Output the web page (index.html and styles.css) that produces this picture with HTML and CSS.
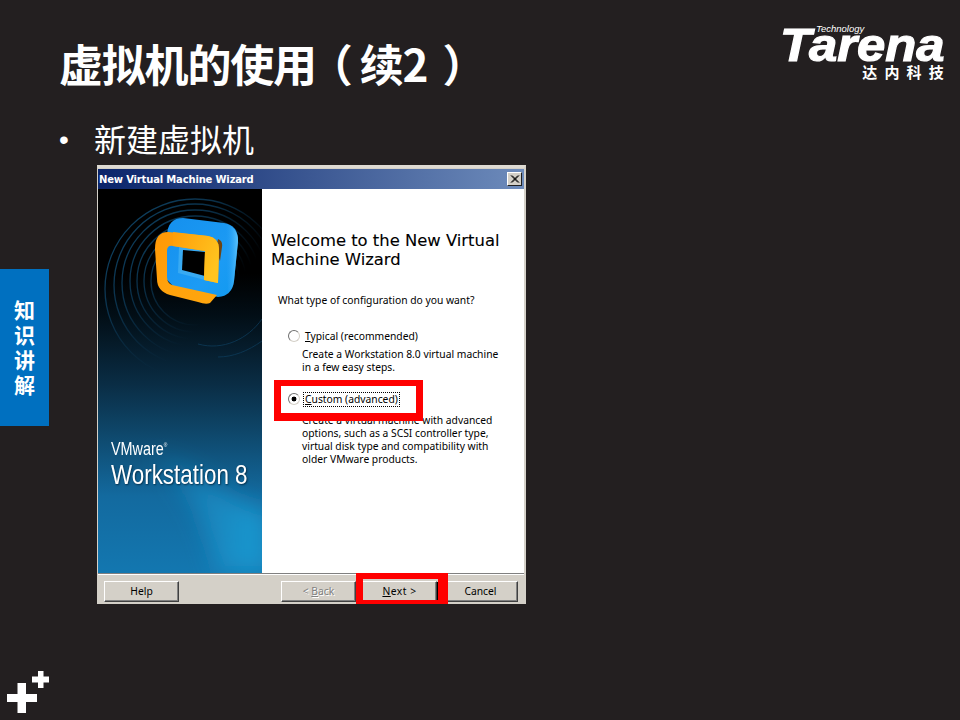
FILE: index.html
```html
<!DOCTYPE html>
<html lang="zh-CN">
<head>
<meta charset="utf-8">
<title>虚拟机的使用（续2）</title>
<link rel="stylesheet" href="styles.css">
</head>
<body>
<main class="slide">
  <header class="head">
    <h1 class="title">虚拟机的使用<span class="punct punct-open">（</span>续2<span class="punct punct-close">）</span></h1>
    <div class="logo">
      <span class="logo-tech">Technology</span>
      <span class="logo-name">Tarena</span>
      <span class="logo-cn">达内科技</span>
    </div>
  </header>
  <div class="bullet"><span class="dot">•</span><span>新建虚拟机</span></div>

  <section class="wizard">
    <div class="titlebar">
      <span>New Virtual Machine Wizard</span>
      <span class="close"><svg width="11" height="10" viewBox="0 0 11 10"><path d="M2 1.5l7 7M3 1.5l7 7M9 1.5l-7 7M10 1.5l-7 7" stroke="#000" stroke-width="1" fill="none"/></svg></span>
    </div>
    <div class="body">
      <aside class="art">
        <svg class="art-bg" width="164" height="384" viewBox="0 0 164 384">
          <defs>
            <linearGradient id="bg" x1="0" y1="0" x2="0" y2="1">
              <stop offset="0" stop-color="#000"/>
              <stop offset=".22" stop-color="#000"/>
              <stop offset=".33" stop-color="#020e16"/>
              <stop offset=".51" stop-color="#0a2d45"/>
              <stop offset=".63" stop-color="#0e4669"/>
              <stop offset=".8" stop-color="#136a9f"/>
              <stop offset="1" stop-color="#1377b0"/>
            </linearGradient>
            <linearGradient id="streak" gradientUnits="userSpaceOnUse" x1="40" y1="0" x2="164" y2="0">
              <stop offset="0" stop-color="#1c9ad2" stop-opacity="0"/>
              <stop offset="1" stop-color="#1c9ad2" stop-opacity=".95"/>
            </linearGradient>
            <linearGradient id="ring" gradientUnits="userSpaceOnUse" x1="0" y1="20" x2="130" y2="130">
              <stop offset="0" stop-color="#10496d"/>
              <stop offset=".5" stop-color="#0a2f48"/>
              <stop offset=".9" stop-color="#0a2f48" stop-opacity="0"/>
            </linearGradient>
            <linearGradient id="blue" x1="0" y1="0" x2="1" y2="1">
              <stop offset="0" stop-color="#1590ee"/>
              <stop offset=".65" stop-color="#1c9bf4"/>
              <stop offset="1" stop-color="#119af0"/>
            </linearGradient>
            <linearGradient id="blueside" x1="0" y1="0" x2="1" y2="0">
              <stop offset="0" stop-color="#1a97f2" stop-opacity="0"/>
              <stop offset="1" stop-color="#5cc4fc"/>
            </linearGradient>
            <linearGradient id="orange" x1="0" y1="0" x2="1" y2="1">
              <stop offset="0" stop-color="#ff9806"/>
              <stop offset=".5" stop-color="#ffa20c"/>
              <stop offset="1" stop-color="#ffa60e"/>
            </linearGradient>
            <linearGradient id="orangetop" gradientUnits="userSpaceOnUse" x1="75" y1="50" x2="121" y2="70">
              <stop offset="0" stop-color="#ff9f0a"/>
              <stop offset="1" stop-color="#ffc41f"/>
            </linearGradient>
            <filter id="soft"><feGaussianBlur stdDeviation="11"/></filter>
          </defs>
          <rect width="164" height="384" fill="url(#bg)"/>
          <path d="M50 262C90 270 120 310 170 322V384H120C110 340 90 300 50 262Z" fill="url(#streak)" filter="url(#soft)"/>
          <g fill="none" stroke="url(#ring)" stroke-width="1.3">
            <circle cx="97" cy="92" r="44"/>
            <circle cx="97" cy="92" r="51"/>
            <circle cx="97" cy="92" r="58"/>
            <circle cx="97" cy="92" r="65"/>
            <circle cx="97" cy="94" r="73"/>
            <circle cx="97" cy="96" r="81"/>
            <circle cx="97" cy="100" r="90"/>
          </g>
          <g fill="none" stroke="#0e3f5f" stroke-width="1" opacity=".7">
            <path d="M100 155C125 162 150 150 164 130"/>
            <path d="M120 168C135 168 150 162 164 152"/>
          </g>
          <path d="M69 46Q70 29 85 29L126 34Q140 36 140 52L136 92Q134 107 120 108L76 98L68 90Z" fill="url(#blue)"/>
          <path d="M127 35Q140 38 140 52L136 92Q135 100 130 104Z" fill="url(#blueside)"/>
          <path d="M81 58L107 62L107 91L80 84Z" fill="#38aaf2"/>
          <path d="M85 61L107 63L107 87L84 81Z" fill="#000"/>
          <path d="M120 50Q125 52 124 58L122 72L118 60Z" fill="#6e4412"/>
          <path d="M57 60Q57 43 70 43L110 47Q121 49 121 60L120 94L106 91L107 62L75 57Q69 56 69 62L69 88Q69 94 74 96L119 106L112 114Q108 116 100 113L72 106Q59 102 59 90Z" fill="url(#orange)"/>
          <path d="M75 43L110 47Q121 49 121 60L120 94L106 91L107 62L75 57Z" fill="url(#orangetop)"/>
        </svg>
        <div class="brand">
          <div class="vm">VMware<sup>®</sup></div>
          <div class="ws">Workstation 8</div>
        </div>
      </aside>
      <div class="content">
        <h2 class="welcome">Welcome to the New Virtual<br>Machine Wizard</h2>
        <p class="question">What type of configuration do you want?</p>
        <div class="option">
          <span class="radio"></span>
          <span class="label"><u>T</u>ypical (recommended)</span>
        </div>
        <p class="desc">Create a Workstation 8.0 virtual machine<br>in a few easy steps.</p>
        <div class="option option-custom">
          <span class="radio checked"></span>
          <span class="label focus"><u>C</u>ustom (advanced)</span>
        </div>
        <p class="desc desc-custom">Create a virtual machine with advanced<br>options, such as a SCSI controller type,<br>virtual disk type and compatibility with<br>older VMware products.</p>
        <div class="mark mark-option"></div>
      </div>
    </div>
    <footer class="buttons">
      <button class="btn">Help</button>
      <span class="spacer"></span>
      <button class="btn disabled">&lt; <u>B</u>ack</button>
      <button class="btn default"><u>N</u>ext &gt;</button>
      <button class="btn">Cancel</button>
      <div class="mark mark-next"></div>
    </footer>
  </section>

  <nav class="tab"><span>知</span><span>识</span><span>讲</span><span>解</span></nav>
  <svg class="plus" width="60" height="60" viewBox="0 0 60 60">
    <path d="M7 34h10.500V23h8.500v11h11v8H26v11h-8.500V42H7z" fill="#fff"/>
    <path d="M32 16.500h6V11h5.500v5.500H49v6h-5.500V28H38v-5.500h-6z" fill="#fff"/>
  </svg>
</main>
</body>
</html>
```

FILE: styles.css
```css
* { box-sizing: border-box; }
html, body { margin: 0; padding: 0; }
body { background: #231f20; }
.slide {
  position: relative;
  width: 960px;
  height: 720px;
  overflow: hidden;
  background: #231f20;
  color: #fff;
  font-family: "Noto Sans CJK SC", "Noto Sans", sans-serif;
}
.head {
  display: flex;
  justify-content: space-between;
  align-items: flex-start;
  height: 110px;
  padding: 25px 16px 0 59px;
}
.title {
  margin: -2px 0 0;
  font-size: 44px;
  font-weight: 700;
  line-height: 80px;
  letter-spacing: -1.2px;
  white-space: nowrap;
}
.punct { display: inline-block; letter-spacing: 0; }
.punct-open { transform: translateX(-7px); }
.punct-close { transform: translateX(15px); }
.logo {
  position: relative;
  width: 164px;
  height: 56px;
  flex: none;
}
.logo-tech {
  position: absolute;
  left: 36px;
  top: -2px;
  font: italic 400 9.5px "Liberation Sans", sans-serif;
}
.logo-name {
  position: absolute;
  left: 0;
  top: -7px;
  font: italic 700 47px/53px "Liberation Sans", sans-serif;
  -webkit-text-stroke: 1.2px #fff;
  transform: scaleX(1.08);
  transform-origin: left;
}
.logo-cn {
  position: absolute;
  right: 0;
  top: 38px;
  font-size: 15px;
  font-weight: 700;
  line-height: 18px;
  letter-spacing: 7.2px;
  margin-right: -7px;
}
.bullet {
  display: flex;
  height: 55px;
  padding-left: 59px;
  font-size: 32px;
  line-height: 56px;
  font-weight: 400;
}
.dot { width: 35px; font-family: "Liberation Sans", sans-serif; font-size: 28px; line-height: 60px; }
.wizard {
  display: flex;
  flex-direction: column;
  width: 429px;
  height: 439px;
  margin-left: 97px;
  background: #d4d0c8;
  border-top: 3px solid #dedad3;
  border-left: 1px solid #d4d0c8;
  border-right: 2px solid #d4d0c8;
  color: #000;
  font-family: "Noto Sans", sans-serif;
}
.titlebar {
  display: flex;
  align-items: center;
  justify-content: space-between;
  height: 20px;
  margin-top: 1px;
  padding: 0 2px 0 1px;
  background: linear-gradient(90deg, #0a246a, #6d8bbb);
  color: #fff;
  font: 700 10px "DejaVu Sans", sans-serif;
  letter-spacing: -.17px;
  flex: none;
}
.close {
  display: flex;
  align-items: center;
  justify-content: center;
  width: 15px;
  height: 14px;
  background: #d4d0c8;
  border: 1px solid;
  border-color: #fff #202020 #202020 #fff;
}
.body {
  display: flex;
  height: 385px;
  flex: none;
  border-bottom: 1px solid #808080;
}
.art {
  position: relative;
  display: flex;
  flex-direction: column;
  justify-content: flex-end;
  width: 164px;
  height: 384px;
  flex: none;
  color: #fff;
  padding: 0 0 80px 13px;
  overflow: hidden;
}
.art-bg { position: absolute; left: 0; top: 0; }
.brand { position: relative; font-family: "Liberation Sans", sans-serif; }
.vm { font-size: 18px; line-height: 18px; margin-bottom: -1px; transform: scaleX(.8); transform-origin: left; }
.vm sup { font-size: 6px; line-height: 0; vertical-align: 8px; }
.ws { font-size: 28px; line-height: 36px; transform: scaleX(.8); transform-origin: left; white-space: nowrap; text-shadow: 1px 1px 2px #06304c; }
.content {
  position: relative;
  flex: 1;
  background: #fff;
  padding: 42px 0 0 9px;
  font-size: 10.3px;
  line-height: 13px;
}
.welcome {
  margin: 0 0 25px;
  font: 400 16.4px/19px "DejaVu Sans", sans-serif;
  -webkit-text-stroke: .1px #000;
}
.question { margin: 0 0 22px 7px; }
.option {
  display: flex;
  align-items: center;
  gap: 5px;
  margin-left: 17px;
  height: 14px;
}
.radio {
  width: 12px;
  height: 12px;
  border-radius: 50%;
  border: 1.500px solid;
  border-color: #707070 #d4d0c8 #d4d0c8 #707070;
  background: #fff;
  flex: none;
}
.radio.checked { background: radial-gradient(circle, #000 0 2.200px, #fff 2.700px); }
.desc { margin: 5px 0 0 31px; }
.option-custom { margin-top: 18px; }
.label.focus { outline: 1px dotted #000; padding: 0 1px; margin-left: -1px; }
.desc-custom { margin-top: 8px; }
.mark {
  position: absolute;
  border-style: solid;
  border-color: #f00;
}
.mark-option { left: 12px; top: 191px; width: 149px; height: 41px; border-width: 6px 7px 8px; }
.buttons {
  position: relative;
  display: flex;
  align-items: flex-start;
  flex: 1;
  padding: 7px 6px 0;
  gap: 6px;
  box-shadow: inset 0 1px 0 #fff;
}
.spacer { flex: 1; }
.btn {
  width: 75px;
  height: 21px;
  padding: 0 0 2px;
  background: #d4d0c8;
  border: 1px solid;
  border-color: #fff #404040 #404040 #fff;
  box-shadow: inset -1px -1px 0 #808080;
  font: 400 10.3px "Noto Sans", sans-serif;
  color: #000;
}
.btn.disabled { color: #808080; text-shadow: 1px 1px 0 #fff; }
.btn.default { box-shadow: inset -1px -1px 0 #808080, 1px 1px 0 #000; letter-spacing: .5px; }
.mark-next { right: 76px; top: -1px; width: 92px; height: 31px; border-width: 6px 10px 4px 7px; }
.tab {
  position: absolute;
  left: 0;
  top: 269px;
  display: flex;
  flex-direction: column;
  align-items: center;
  justify-content: center;
  width: 49px;
  height: 157px;
  padding-bottom: 2px;
  background: #0070c0;
  font-size: 21px;
  font-weight: 700;
  line-height: 25px;
}
.plus { position: absolute; left: 0; top: 660px; }
```
